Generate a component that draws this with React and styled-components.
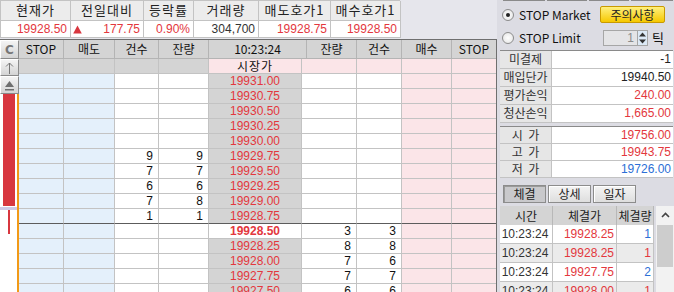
import React from "react";
import styled, { createGlobalStyle, css } from "styled-components";

const RED = "#e3373d";
const BLUE = "#2c6fd6";
const LINE = "#c3c3c3";
const GRAY = "#d4d4d4";
const SKY = "#e4f0fb";
const PINK = "#fbe5e8";

const num = css`
  font-family: "Liberation Sans", "Noto Sans CJK KR", sans-serif;
  font-size: 12px;
`;

const GlobalStyle = createGlobalStyle`
  * { box-sizing: border-box; }
  html, body { margin: 0; padding: 0; }
  body {
    background: #e6e6ec;
    font-family: "Noto Sans CJK KR", "Noto Sans", sans-serif;
    font-size: 12px;
    color: #222;
    overflow: hidden;
  }
`;

const quote = [
  { label: "현재가", value: "19928.50", color: RED },
  { label: "전일대비", value: "177.75", color: RED, up: true },
  { label: "등락률", value: "0.90%", color: RED },
  { label: "거래량", value: "304,700", color: "#333" },
  { label: "매도호가1", value: "19928.75", color: RED },
  { label: "매수호가1", value: "19928.50", color: RED },
];

// price, 건수, 잔량 (sell side)
const asks = [
  ["19931.00"], ["19930.75"], ["19930.50"], ["19930.25"], ["19930.00"],
  ["19929.75", 9, 9], ["19929.50", 7, 7], ["19929.25", 6, 6],
  ["19929.00", 7, 8], ["19928.75", 1, 1],
];
// price, 잔량, 건수 (buy side)
const bids = [
  ["19928.50", 3, 3], ["19928.25", 8, 8], ["19928.00", 7, 6],
  ["19927.75", 7, 7], ["19927.50", 6, 6],
];

const trades = [
  { time: "10:23:24", price: "19928.25", qty: 1, color: BLUE },
  { time: "10:23:24", price: "19928.25", qty: 1, color: RED },
  { time: "10:23:24", price: "19927.75", qty: 2, color: BLUE },
  { time: "10:23:24", price: "19928.00", qty: 1, color: RED },
];

function App() {
  const lastAsk = asks.length - 1;
  return (
    <>
      <GlobalStyle />
      <Page>
        <Main>
          <Quote>
            {quote.map((q) => (
              <QuoteHead key={q.label}>{q.label}</QuoteHead>
            ))}
            {quote.map((q) => (
              <QuoteVal key={q.label} $color={q.color}>
                {q.up && (
                  <svg width="9" height="9" viewBox="0 0 9 9">
                    <path d="M4.5 0.5L8.8 8.5H0.2z" fill="#d8373f" />
                  </svg>
                )}
                <span>{q.value}</span>
              </QuoteVal>
            ))}
          </Quote>

          <Board>
            <Strip>
              <StripBtn $h={19}>C</StripBtn>
              <StripBtn $h={17}>
                <svg width="9" height="12" viewBox="0 0 9 12">
                  <path d="M4.5 1v11M1 4.5l3.5-3.5 3.5 3.5" stroke="#777" fill="none" />
                </svg>
              </StripBtn>
              <StripBtn $h={18}>
                <svg width="11" height="11" viewBox="0 0 11 11">
                  <path d="M5.5 1L10 7H1z" fill="#6f6f6f" />
                  <rect x="1" y="9" width="9" height="1.5" fill="#6f6f6f" />
                </svg>
              </StripBtn>
              <Chart>
                <svg width="17" height="200" viewBox="0 0 17 200">
                  <rect x="3" y="0" width="12" height="112" fill="#d8373f" />
                  <rect x="0" y="113" width="17" height="3" fill="#cfc9e6" />
                  <rect x="8" y="116" width="2" height="24" fill="#d8373f" />
                </svg>
              </Chart>
            </Strip>

            <Ladder>
              <Line $h={19}>
                <Head>STOP</Head>
                <Head>매도</Head>
                <Head>건수</Head>
                <Head>잔량</Head>
                <Head $span={2}>10:23:24</Head>
                <Head>잔량</Head>
                <Head>건수</Head>
                <Head>매수</Head>
                <Head>STOP</Head>
              </Line>
              <Line>
                <Cell $bg={GRAY} />
                <Cell $bg={GRAY} />
                <Cell $bg={GRAY} />
                <Cell $bg={GRAY} />
                <MarketCell>시장가</MarketCell>
                <Cell $bg={PINK} />
                <Cell $bg={PINK} />
                <Cell $bg={PINK} />
                <Cell $bg={PINK} />
                <Cell $bg={PINK} $last />
              </Line>
              {asks.map(([price, cnt, qty], i) => (
                <Line key={price}>
                  <Cell $bg={SKY} $dark={i === lastAsk} />
                  <Cell $bg={SKY} $dark={i === lastAsk} />
                  <Cell $dark={i === lastAsk}>{cnt}</Cell>
                  <Cell $dark={i === lastAsk}>{qty}</Cell>
                  <Cell $bg={GRAY} $align="center" $color={RED} $dark={i === lastAsk}>
                    {price}
                  </Cell>
                  <Cell $dark={i === lastAsk} />
                  <Cell $dark={i === lastAsk} />
                  <Cell $dark={i === lastAsk} />
                  <Cell $bg={PINK} $dark={i === lastAsk} />
                  <Cell $bg={PINK} $dark={i === lastAsk} $last />
                </Line>
              ))}
              {bids.map(([price, qty, cnt], i) => (
                <Line key={price}>
                  <Cell $bg={SKY} />
                  <Cell $bg={SKY} />
                  <Cell />
                  <Cell />
                  <Cell
                    $bg={i === 0 ? "#fff" : GRAY}
                    $align="center"
                    $color={RED}
                    $bold={i === 0}
                  >
                    {price}
                  </Cell>
                  <Cell />
                  <Cell>{qty}</Cell>
                  <Cell>{cnt}</Cell>
                  <Cell $bg={PINK} />
                  <Cell $bg={PINK} $last />
                </Line>
              ))}
            </Ladder>
          </Board>
        </Main>

        <Side>
          <Stubs>
            <Stub $w={42} />
            <Stub $w={40} />
            <Stub $w={40} />
            <Stub $w={42} />
          </Stubs>
          <Option $top={5}>
            <Radio $on />
            <OptLabel>STOP Market</OptLabel>
            <WarnBtn>주의사항</WarnBtn>
          </Option>
          <Option $top={6}>
            <Radio />
            <OptLabel>STOP Limit</OptLabel>
            <Spin>
              <SpinField>1</SpinField>
              <SpinArrows>
                <svg width="9" height="14" viewBox="0 0 9 14">
                  <path d="M4.5 1.5L8 5.5H1z" fill="#333" />
                  <path d="M4.5 12.5L8 8.5H1z" fill="#333" />
                </svg>
              </SpinArrows>
            </Spin>
            <Tick>틱</Tick>
          </Option>

          <Info $top={4} $row={18}>
            <InfoLabel>미결제</InfoLabel>
            <InfoVal>-1</InfoVal>
            <InfoLabel>매입단가</InfoLabel>
            <InfoVal>19940.50</InfoVal>
            <InfoLabel>평가손익</InfoLabel>
            <InfoVal $color={RED}>240.00</InfoVal>
            <InfoLabel>청산손익</InfoLabel>
            <InfoVal $color={RED}>1,665.00</InfoVal>
          </Info>
          <Info $top={3} $row={17}>
            <InfoLabel>시&nbsp;&nbsp;가</InfoLabel>
            <InfoVal $color={RED}>19756.00</InfoVal>
            <InfoLabel>고&nbsp;&nbsp;가</InfoLabel>
            <InfoVal $color={RED}>19943.75</InfoVal>
            <InfoLabel>저&nbsp;&nbsp;가</InfoLabel>
            <InfoVal $color={BLUE}>19726.00</InfoVal>
          </Info>

          <Tabs>
            <Tab $active>체결</Tab>
            <Tab>상세</Tab>
            <Tab>일자</Tab>
          </Tabs>

          <Trades>
            <TradeGrid>
              <TradeHead>시간</TradeHead>
              <TradeHead>체결가</TradeHead>
              <TradeHead>체결량</TradeHead>
              {trades.map((t, i) => (
                <React.Fragment key={i}>
                  <TradeCell $alt={i % 2 === 1} $color="#333" $align="center">
                    {t.time}
                  </TradeCell>
                  <TradeCell $alt={i % 2 === 1} $color={RED}>
                    {t.price}
                  </TradeCell>
                  <TradeCell $alt={i % 2 === 1} $color={t.color}>
                    {t.qty}
                  </TradeCell>
                </React.Fragment>
              ))}
            </TradeGrid>
            <Scroll>
              <ScrollBtn>
                <svg width="9" height="6" viewBox="0 0 9 6">
                  <path d="M1 5l3.5-3.5L8 5" stroke="#444" strokeWidth="1.6" fill="none" />
                </svg>
              </ScrollBtn>
              <Thumb />
            </Scroll>
          </Trades>
        </Side>
      </Page>
    </>
  );
}

export default App;

const Page = styled.div`
  display: flex;
  width: 674px;
  height: 292px;
  overflow: hidden;
`;

const Main = styled.div`
  width: 497px;
  flex: none;
  display: flex;
  flex-direction: column;
`;

const Quote = styled.div`
  display: grid;
  grid-template-columns: 70px 73px 50px 65px 72px 70px;
  grid-template-rows: 20px 17px;
  width: 400px;
  border-top: 1px solid ${LINE};
  border-left: 1px solid ${LINE};
`;

const QuoteHead = styled.div`
  background: #ececec;
  border-right: 1px solid ${LINE};
  border-bottom: 1px solid ${LINE};
  text-align: center;
  line-height: 18px;
  font-size: 13px;
  color: #222;
  letter-spacing: 1px;
`;

const QuoteVal = styled.div`
  ${num};
  background: #fff;
  border-right: 1px solid ${LINE};
  border-bottom: 1px solid ${LINE};
  color: ${(p) => p.$color};
  display: flex;
  align-items: center;
  padding: 0 3px 0 2px;
  line-height: 15px;
  & > span:last-child {
    margin-left: auto;
  }
`;

const Board = styled.div`
  margin-top: 1px;
  flex: 1;
  display: flex;
  border-top: 1px solid #6f6f6f;
  border-right: 1px solid #6f6f6f;
  overflow: hidden;
`;

const Strip = styled.div`
  width: 19px;
  flex: none;
  display: flex;
  flex-direction: column;
`;

const StripBtn = styled.div`
  height: ${(p) => p.$h}px;
  flex: none;
  background: linear-gradient(#f4f4f4, #d4d4d4);
  border: 1px solid;
  border-color: #fff #8a8a8a #8a8a8a #fff;
  display: flex;
  align-items: center;
  justify-content: center;
  color: #777;
  font-family: "DejaVu Sans", sans-serif;
  font-weight: bold;
  font-size: 12px;
`;

const Chart = styled.div`
  flex: 1;
  background: #fff;
  border-right: 2px solid #f29a18;
  line-height: 0;
`;

const Ladder = styled.div`
  flex: 1;
  display: flex;
  flex-direction: column;
`;

const Line = styled.div`
  display: grid;
  grid-template-columns: 45px 51px 44px 50px 93px 5px 50px 45px 50px 44px;
  height: ${(p) => p.$h || 15}px;
  flex: none;
`;

const Head = styled.div`
  grid-column: span ${(p) => p.$span || 1};
  background: ${GRAY};
  border-right: 1px solid #b4b4b4;
  border-bottom: 1px solid #b4b4b4;
  text-align: center;
  line-height: 18px;
  font-size: 12px;
  color: #111;
  &:last-child {
    border-right: none;
  }
`;

const Cell = styled.div`
  ${num};
  background: ${(p) => p.$bg || "#fff"};
  border-right: ${(p) => (p.$last ? "none" : `1px solid ${LINE}`)};
  border-bottom: 1px solid ${(p) => (p.$dark ? "#5c5c5c" : LINE)};
  color: ${(p) => p.$color || "#111"};
  font-weight: ${(p) => (p.$bold ? 700 : 400)};
  text-align: ${(p) => p.$align || "right"};
  padding: 0 ${(p) => (p.$align === "center" ? 0 : 5)}px;
  line-height: 14px;
  white-space: nowrap;
`;

const MarketCell = styled.div`
  background: ${PINK};
  border-right: 1px solid ${LINE};
  border-bottom: 1px solid ${LINE};
  text-align: center;
  font-size: 12px;
  line-height: 14px;
  letter-spacing: 1px;
  color: #111;
`;

const Side = styled.div`
  width: 177px;
  flex: none;
  background: #dcdce3;
  display: flex;
  flex-direction: column;
  padding-left: 3px;
`;

const Stubs = styled.div`
  display: flex;
  gap: 2px;
  height: 3px;
  padding-left: 3px;
`;

const Stub = styled.div`
  width: ${(p) => p.$w}px;
  background: #e2e2e2;
  border: 1px solid #8a8a8a;
  border-top: none;
`;

const Option = styled.div`
  display: flex;
  align-items: center;
  height: 17px;
  margin-top: ${(p) => p.$top}px;
  padding-left: 2px;
`;

const Radio = styled.span`
  width: 12px;
  height: 12px;
  border-radius: 50%;
  border: 1px solid #8c8c8c;
  background: radial-gradient(#ffffff, #e2e2e2);
  display: inline-flex;
  align-items: center;
  justify-content: center;
  flex: none;
  &::after {
    content: "";
    width: 4px;
    height: 4px;
    border-radius: 50%;
    background: ${(p) => (p.$on ? "#222" : "transparent")};
  }
`;

const OptLabel = styled.span`
  margin-left: 5px;
  color: #111;
  font-size: 12px;
`;

const WarnBtn = styled.div`
  margin-left: auto;
  margin-right: 9px;
  width: 65px;
  height: 17px;
  background: linear-gradient(#fff07e, #f6c800);
  border: 1px solid #c99a00;
  border-radius: 2px;
  text-align: center;
  line-height: 15px;
  font-size: 12px;
  color: #222;
`;

const Spin = styled.div`
  margin-left: auto;
  margin-right: 4px;
  display: flex;
  height: 16px;
`;

const SpinField = styled.div`
  ${num};
  width: 35px;
  background: #e4e4e6;
  border: 1px solid #a6a6a6;
  color: #8a8a8a;
  text-align: right;
  padding-right: 3px;
  line-height: 14px;
`;

const SpinArrows = styled.div`
  width: 10px;
  background: #dce9f6;
  border: 1px solid #a6a6a6;
  border-left: none;
  display: flex;
  align-items: center;
  justify-content: center;
`;

const Tick = styled.span`
  margin-right: 10px;
  font-size: 13px;
  color: #111;
`;

const Info = styled.div`
  margin-top: ${(p) => p.$top}px;
  display: grid;
  grid-template-columns: 52px 1fr;
  grid-auto-rows: ${(p) => p.$row}px;
  border-top: 1px solid #8a8a8a;
  margin-right: 1px;
`;

const InfoLabel = styled.div`
  background: #e6e6e6;
  border-right: 1px solid ${LINE};
  border-bottom: 1px solid ${LINE};
  text-align: center;
  line-height: 16px;
  color: #333;
  font-size: 12px;
`;

const InfoVal = styled.div`
  ${num};
  background: #fff;
  border-bottom: 1px solid ${LINE};
  text-align: right;
  padding-right: 2px;
  line-height: 16px;
  color: ${(p) => p.$color || "#222"};
`;

const Tabs = styled.div`
  display: flex;
  gap: 2px;
  margin-top: 7px;
  padding-left: 3px;
`;

const Tab = styled.div`
  width: 43px;
  height: 18px;
  text-align: center;
  line-height: 16px;
  font-size: 12px;
  color: #222;
  background: ${(p) => (p.$active ? "#c9c9cc" : "linear-gradient(#f4f4f4, #dedede)")};
  border: 1px solid #8c8c8c;
  box-shadow: ${(p) => (p.$active ? "inset 1px 1px 0 #9a9a9a" : "inset 1px 1px 0 #fff")};
`;

const Trades = styled.div`
  display: flex;
  margin-top: 3px;
`;

const TradeGrid = styled.div`
  display: grid;
  grid-template-columns: 53px 64px 37px;
  grid-auto-rows: 19px;
`;

const TradeHead = styled.div`
  background: ${GRAY};
  border-right: 1px solid #b8b8b8;
  text-align: center;
  line-height: 19px;
  font-size: 12px;
  color: #222;
`;

const TradeCell = styled.div`
  ${num};
  background: ${(p) => (p.$alt ? "#ebebeb" : "#fff")};
  border-right: 1px solid ${LINE};
  border-bottom: 1px solid ${LINE};
  color: ${(p) => p.$color};
  text-align: ${(p) => p.$align || "right"};
  padding-right: 2px;
  line-height: 18px;
`;

const Scroll = styled.div`
  width: 18px;
  margin-left: 2px;
  background: #f2f2f2;
  display: flex;
  flex-direction: column;
`;

const ScrollBtn = styled.div`
  height: 18px;
  display: flex;
  align-items: center;
  justify-content: center;
`;

const Thumb = styled.div`
  margin: 1px 1px 0;
  height: 42px;
  background: #cdcdcd;
`;
